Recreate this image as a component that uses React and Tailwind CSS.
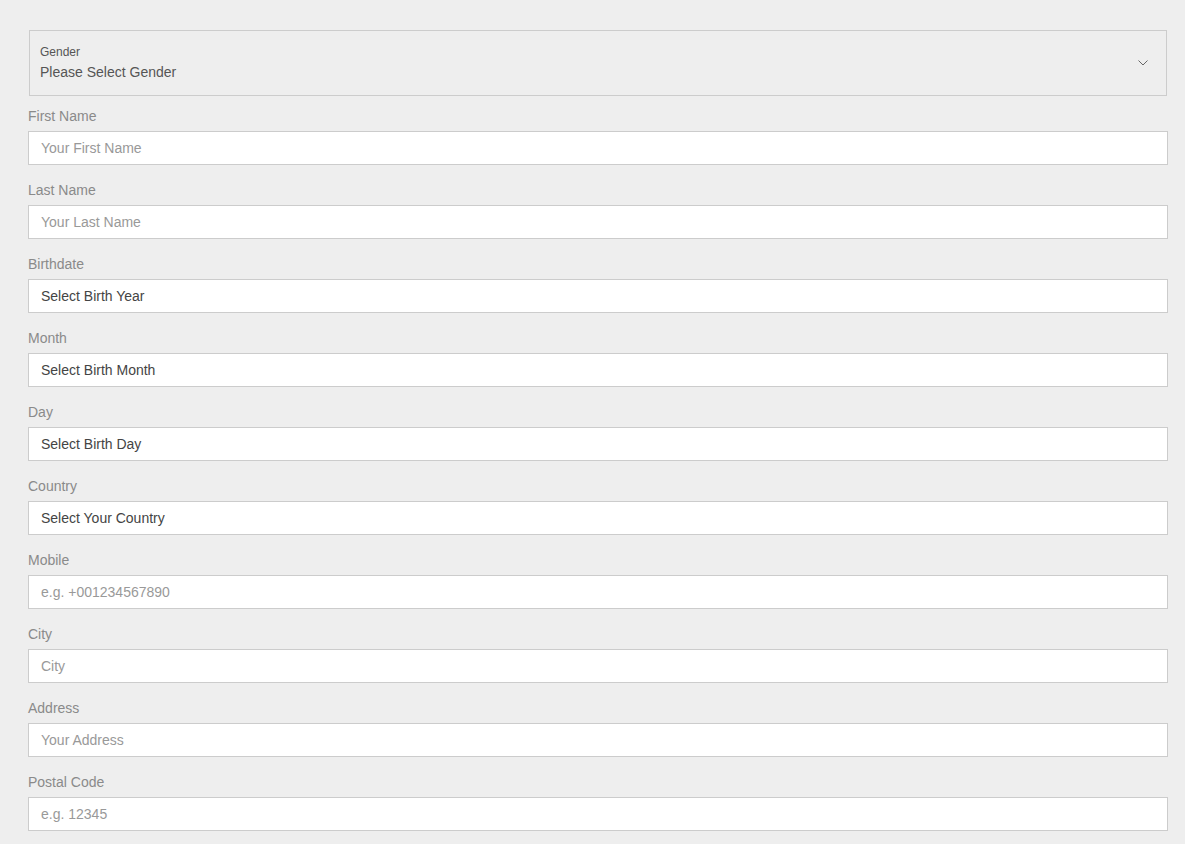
const fields = [
  { label: 'First Name', text: 'Your First Name', placeholder: true },
  { label: 'Last Name', text: 'Your Last Name', placeholder: true },
  { label: 'Birthdate', text: 'Select Birth Year' },
  { label: 'Month', text: 'Select Birth Month' },
  { label: 'Day', text: 'Select Birth Day' },
  { label: 'Country', text: 'Select Your Country' },
  { label: 'Mobile', text: 'e.g. +001234567890', placeholder: true },
  { label: 'City', text: 'City', placeholder: true },
  { label: 'Address', text: 'Your Address', placeholder: true },
  { label: 'Postal Code', text: 'e.g. 12345', placeholder: true },
];

const App = () => {
  return (
    <div className="min-h-screen w-full bg-[#eeeeee] pl-[28px] pr-[17px] pt-[30px] font-['Liberation_Sans',Arial,sans-serif]">
      {/* Gender select */}
      <div className="mx-px h-[66px] border border-[#cccccc] flex items-center justify-between pl-[10px] pr-[18px]">
        <div className="flex flex-col">
          <span className="text-[12px] leading-[16px] text-[#555555]">Gender</span>
          <span className="mt-[2px] text-[14px] leading-[20px] text-[#555555]">Please Select Gender</span>
        </div>
        <svg width="10" height="6" viewBox="0 0 10 6">
          <path d="M0.5 0.5 L5 5 L9.5 0.5" fill="none" stroke="#666666" strokeWidth="1" />
        </svg>
      </div>

      <div className="mt-[10px] flex flex-col gap-[15px]">
        {fields.map((f) => (
          <div key={f.label} className="flex flex-col">
            <label className="text-[14px] leading-[20px] text-[#8a8a8a] mb-[5px]">{f.label}</label>
            <div className="h-[34px] bg-white border border-[#cccccc] flex items-center px-[12px]">
              <span className={f.placeholder ? 'text-[14px] text-[#999999]' : 'text-[14px] text-[#444444]'}>
                {f.text}
              </span>
            </div>
          </div>
        ))}
      </div>
    </div>
  );
};

export default App;
